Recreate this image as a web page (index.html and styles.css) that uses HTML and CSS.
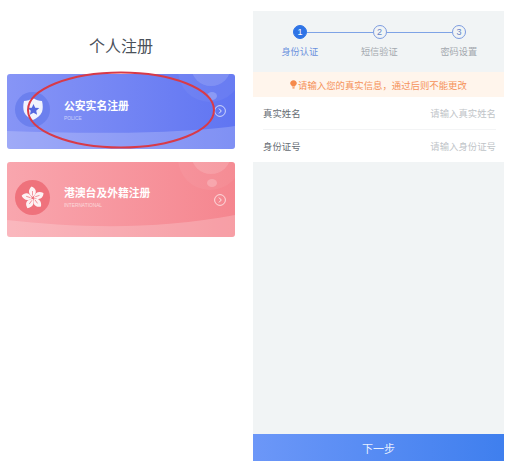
FILE: index.html
```html
<!DOCTYPE html>
<html lang="zh-CN">
<head>
<meta charset="utf-8">
<title>个人注册</title>
<link rel="stylesheet" href="styles.css">
</head>
<body>
<div class="page">
  <section class="left">
    <h1 class="title">个人注册</h1>
    <div class="card card-blue">
      <svg class="card-bg" viewBox="0 0 228 75" preserveAspectRatio="none" aria-hidden="true">
        <circle cx="204" cy="-8" r="20" fill="#fff" opacity=".14"/>
        <circle cx="203" cy="-4" r="32" fill="#fff" opacity=".05"/>
        <ellipse cx="205" cy="22" rx="5" ry="4" fill="#fff" opacity=".22"/>
        <path d="M0 57 C80 60 170 60 228 52 V75 H0Z" fill="#fff" opacity=".2"/>
      </svg>
      <div class="badge badge-blue">
        <svg viewBox="0 0 35 35" width="35" height="35" aria-hidden="true">
          <path d="M18 6 C21 8 24 9 27 9 C28 13 28 17 27 20 C25 24 22 26 18 28 C14 26 11 24 9 20 C8 17 8 13 9 9 C12 9 15 8 18 6Z" fill="#fff" opacity=".9"/>
          <path d="M18.500 12 l1.700 3.700 4.100 .4 -3.100 2.700 .9 4 -3.600 -2.100 -3.600 2.100 .9 -4 -3.100 -2.700 4.100 -.4Z" fill="#5468e0"/>
        </svg>
      </div>
      <div class="card-text card-text-up">
        <div class="card-title">公安实名注册</div>
        <div class="card-sub">POLICE</div>
      </div>
      <svg class="chev chev-up" viewBox="0 0 12 12" width="12" height="12" aria-hidden="true">
        <circle cx="6" cy="6" r="5.400" fill="none" stroke="#fff" stroke-width=".7"/>
        <path d="M5 3.600 L7.300 6 L5 8.400" fill="none" stroke="#fff" stroke-width=".8"/>
      </svg>
    </div>
    <div class="card card-red">
      <svg class="card-bg" viewBox="0 0 228 75" preserveAspectRatio="none" aria-hidden="true">
        <circle cx="204" cy="-8" r="20" fill="#fff" opacity=".14"/>
        <circle cx="203" cy="-4" r="32" fill="#fff" opacity=".05"/>
        <ellipse cx="205" cy="21" rx="5" ry="4" fill="#fff" opacity=".22"/>
        <path d="M0 58 C70 66 150 68 228 53 V75 H0Z" fill="#fff" opacity=".2"/>
      </svg>
      <div class="badge badge-red">
        <svg viewBox="0 0 35 35" width="35" height="35" aria-hidden="true">
          <g class="petals">
            <path d="M17.500 17 C13 14 13 10 16.500 6.500 C21 8 23 13 17.500 17Z"/>
            <path d="M17.500 17 C13 14 13 10 16.500 6.500 C21 8 23 13 17.500 17Z" transform="rotate(72 18 18)"/>
            <path d="M17.500 17 C13 14 13 10 16.500 6.500 C21 8 23 13 17.500 17Z" transform="rotate(144 18 18)"/>
            <path d="M17.500 17 C13 14 13 10 16.500 6.500 C21 8 23 13 17.500 17Z" transform="rotate(216 18 18)"/>
            <path d="M17.500 17 C13 14 13 10 16.500 6.500 C21 8 23 13 17.500 17Z" transform="rotate(288 18 18)"/>
          </g>
          <g class="veins">
            <path d="M17.500 15.500 V11"/>
            <path d="M17.500 15.500 V11" transform="rotate(72 18 18)"/>
            <path d="M17.500 15.500 V11" transform="rotate(144 18 18)"/>
            <path d="M17.500 15.500 V11" transform="rotate(216 18 18)"/>
            <path d="M17.500 15.500 V11" transform="rotate(288 18 18)"/>
          </g>
        </svg>
      </div>
      <div class="card-text">
        <div class="card-title">港澳台及外籍注册</div>
        <div class="card-sub">INTERNATIONAL</div>
      </div>
      <svg class="chev" viewBox="0 0 12 12" width="12" height="12" aria-hidden="true">
        <circle cx="6" cy="6" r="5.400" fill="none" stroke="#fff" stroke-width=".7"/>
        <path d="M5 3.600 L7.300 6 L5 8.400" fill="none" stroke="#fff" stroke-width=".8"/>
      </svg>
    </div>
    <svg class="mark" viewBox="0 0 192 80" width="192" height="80" aria-hidden="true">
      <ellipse cx="96" cy="40" rx="93" ry="37.500" fill="none" stroke="#d83a48" stroke-width="2"/>
    </svg>
  </section>
  <section class="panel">
    <div class="steps">
      <div class="track">
        <span class="dot dot-on">1</span>
        <span class="line"></span>
        <span class="dot">2</span>
        <span class="line"></span>
        <span class="dot">3</span>
      </div>
      <div class="labels">
        <span class="label label-on">身份认证</span>
        <span class="label">短信验证</span>
        <span class="label">密码设置</span>
      </div>
    </div>
    <div class="notice">
      <svg viewBox="0 0 8 10" width="7" height="9" aria-hidden="true">
        <path d="M4 0 C6.200 0 7.800 1.600 7.800 3.600 C7.800 5.200 6 6 5.600 7.400 H2.400 C2 6 .2 5.200 .2 3.600 C.2 1.600 1.800 0 4 0Z M2.800 8 H5.200 V9.600 H2.800Z" fill="#f58a4b"/>
      </svg>
      <span>请输入您的真实信息，通过后则不能更改</span>
    </div>
    <div class="form">
      <div class="row"><span class="key">真实姓名</span><span class="hint">请输入真实姓名</span></div>
      <div class="row"><span class="key">身份证号</span><span class="hint">请输入身份证号</span></div>
    </div>
    <div class="spacer"></div>
    <div class="next">下一步</div>
  </section>
</div>
</body>
</html>
```
FILE: styles.css
```css
* { box-sizing: border-box; }
html, body { margin: 0; padding: 0; background: #fff; }
body { font-family: "Liberation Sans", "Noto Sans CJK SC", sans-serif; }
.page { display: flex; width: 507px; height: 468px; padding-top: 11px; overflow: hidden; }
.left { position: relative; flex: none; width: 253px; padding: 0 18px 0 7px; }
.title { margin: 25px 0 0; height: 38px; font-size: 16px; line-height: 22px; font-weight: 400; color: #4a515a; text-align: center; }
.card { position: relative; display: flex; align-items: center; height: 75px; padding-left: 8px; border-radius: 3px; overflow: hidden; color: #fff; }
.card-blue { background: linear-gradient(90deg, #8795f6, #6075f2); }
.card-red { margin-top: 13px; background: linear-gradient(90deg, #f9a6ae, #f5868f); }
.card-bg { position: absolute; left: 0; top: 0; width: 100%; height: 100%; }
.badge { position: relative; flex: none; width: 35px; height: 35px; border-radius: 50%; }
.badge-blue { background: #6c80ee; margin-top: -5px; }
.badge-red { background: #ef727c; margin-top: -4px; }
.petals { fill: #fff; opacity: .92; }
.veins { fill: none; stroke: #ef727c; stroke-width: .7; }
.card-text { position: relative; margin-left: 14px; margin-top: -5px; }
.card-text-up { margin-top: -3px; }
.card-title { font-size: 10.8px; line-height: 14px; font-weight: 700; }
.card-sub { margin-top: 3px; font-size: 4.800px; line-height: 6px; opacity: .6; }
.chev { position: absolute; right: 9px; top: 32px; }
.chev-up { top: 31px; }
.mark { position: absolute; left: 25px; top: 59px; }
.panel { display: flex; flex-direction: column; width: 251px; height: 450px; background: #f1f4f5; }
.steps { height: 61px; padding-top: 14px; }
.track { display: flex; align-items: center; padding: 0 38px 0 40px; }
.dot { flex: none; width: 14px; height: 14px; border: 1px solid #7b9be0; border-radius: 50%; display: flex; align-items: center; justify-content: center; font-size: 9px; line-height: 1; color: #6584c6; }
.dot-on { background: #2f74e6; border-color: #2f74e6; color: #fff; }
.line { flex: 1; height: 1px; background: #7ea3e6; }
.labels { display: grid; grid-template-columns: repeat(3, 79.500px); padding-left: 7px; margin-top: 7px; }
.label { font-size: 9.200px; line-height: 12px; color: #a3a8ae; text-align: center; }
.label-on { color: #6a90dd; }
.notice { display: flex; align-items: center; justify-content: center; gap: 1px; height: 25px; background: #fff5ec; font-size: 9.400px; color: #f5925a; }
.form { background: #fff; padding: 0 8px 0 10px; }
.row { display: flex; align-items: center; justify-content: space-between; height: 32px; font-size: 9.400px; }
.row + .row { height: 33px; border-top: 1px solid #f3f4f5; }
.key { color: #666c73; }
.hint { color: #c0c4c8; }
.spacer { flex: 1; }
.next { height: 27px; padding-top: 2px; line-height: 27px; text-align: center; font-size: 11px; color: #e9f0fe; background: linear-gradient(90deg, #6c97f8, #3f7fee); }
```
